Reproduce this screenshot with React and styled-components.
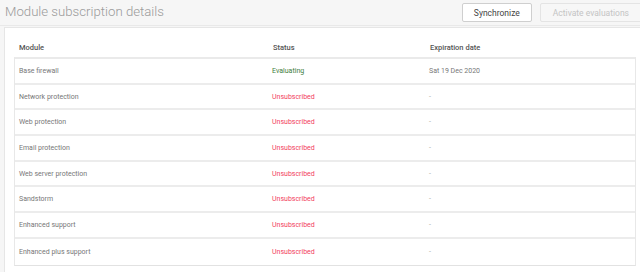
import React from 'react'
import styled, { createGlobalStyle } from 'styled-components'

const GlobalStyle = createGlobalStyle`
  body {
    margin: 0;
    background: #f6f6f6;
    font-family: Roboto, "Liberation Sans", sans-serif;
    overflow: hidden;
  }
`

const modules = [
  { name: 'Base firewall', status: 'Evaluating', expires: 'Sat 19 Dec 2020' },
  { name: 'Network protection', status: 'Unsubscribed', expires: '-' },
  { name: 'Web protection', status: 'Unsubscribed', expires: '-' },
  { name: 'Email protection', status: 'Unsubscribed', expires: '-' },
  { name: 'Web server protection', status: 'Unsubscribed', expires: '-' },
  { name: 'Sandstorm', status: 'Unsubscribed', expires: '-' },
  { name: 'Enhanced support', status: 'Unsubscribed', expires: '-' },
  { name: 'Enhanced plus support', status: 'Unsubscribed', expires: '-' },
]

function App() {
  return (
    <Page>
      <GlobalStyle />
      <Toolbar>
        <Title>Module subscription details</Title>
        <Actions>
          <Button>Synchronize</Button>
          <Button disabled>Activate evaluations</Button>
        </Actions>
      </Toolbar>
      <Panel>
        <HeadRow>
          <HeadCell>Module</HeadCell>
          <HeadCell>Status</HeadCell>
          <HeadCell>Expiration date</HeadCell>
        </HeadRow>
        <Body>
          {modules.map((m) => (
            <Row key={m.name}>
              <Cell>{m.name}</Cell>
              <StatusCell $ok={m.status === 'Evaluating'}>{m.status}</StatusCell>
              <Cell $dim={m.expires === '-'}>{m.expires}</Cell>
            </Row>
          ))}
        </Body>
      </Panel>
    </Page>
  )
}

export default App

const Page = styled.div`
  width: 640px;
  height: 272px;
  overflow: hidden;
`

const Toolbar = styled.div`
  display: flex;
  align-items: center;
  justify-content: space-between;
  height: 25px;
  border-bottom: 1px solid #e9e9e9;
  padding-left: 5px;
`

const Title = styled.div`
  font-size: 13.2px;
  font-weight: 300;
  color: #9a9a9a;
  margin-top: -2px;
`

const Actions = styled.div`
  display: flex;
  gap: 8px;
  margin-right: -2px;
`

const Button = styled.button`
  height: 19px;
  padding: ${(p) => (p.disabled ? '0 12px' : '0 11px')};
  font-family: inherit;
  font-size: 8.5px;
  color: ${(p) => (p.disabled ? '#c4c4c4' : '#444')};
  background: ${(p) => (p.disabled ? '#f7f7f7' : '#fff')};
  border: 1px solid ${(p) => (p.disabled ? '#e4e4e4' : '#cfcfcf')};
  border-radius: 2px;
`

const Panel = styled.div`
  margin: 1px -10px 0 4px;
  background: #fff;
  border: 1px solid #e6e6e6;
  border-right: none;
  padding: 9px 0 20px 9px;
`

const HeadRow = styled.div`
  display: grid;
  grid-template-columns: 254px 157px 1fr;
  height: 20px;
  align-items: center;
  width: 622px;
`

const HeadCell = styled.div`
  font-size: 7.5px;
  font-weight: 500;
  color: #555;
  padding-left: 5px;
`

const Body = styled.div`
  width: 620px;
  border: 1px solid #e8e8e8;
  border-top: 2px solid #eaeaea;
  border-bottom: 1px solid #e2e2e2;
`

const Row = styled.div`
  display: grid;
  grid-template-columns: 253px 157px 1fr;
  align-items: center;
  height: 25.7px;
  box-sizing: border-box;
  border-bottom: 2px solid #ececec;

  &:last-child {
    border-bottom: none;
  }
`

const Cell = styled.div`
  font-size: 7px;
  color: ${(p) => (p.$dim ? '#aaa' : '#777')};
  padding-left: 4px;
  white-space: nowrap;
`

const StatusCell = styled(Cell)`
  color: ${(p) => (p.$ok ? '#3d7d3d' : '#f2405e')};
`
